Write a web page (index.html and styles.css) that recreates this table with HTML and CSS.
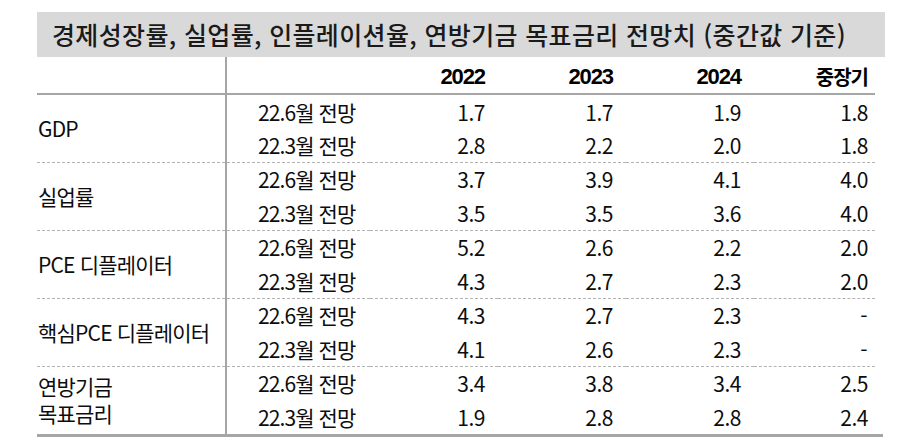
FILE: index.html
```html
<!DOCTYPE html>
<html lang="ko">
<head>
<meta charset="utf-8">
<title>전망치</title>
<link rel="stylesheet" href="styles.css">
</head>
<body>
<div class="panel">
  <div class="title">경제성장률, 실업률, 인플레이션율, 연방기금 목표금리 전망치 (중간값 기준)</div>
  <table class="data">
    <colgroup>
      <col class="c-lab"><col class="c-sub"><col class="c-val"><col class="c-val"><col class="c-val"><col class="c-last">
    </colgroup>
    <thead>
      <tr>
        <th class="lab"></th><th class="sub"></th>
        <th class="year">2022</th><th class="year">2023</th><th class="year">2024</th><th class="year last kr">중장기</th>
      </tr>
    </thead>
    <tbody>
      <tr class="first"><td class="lab" rowspan="2">GDP</td><td class="sub">22.6월 전망</td><td>1.7</td><td>1.7</td><td>1.9</td><td class="last">1.8</td></tr>
      <tr class="second"><td class="sub">22.3월 전망</td><td>2.8</td><td>2.2</td><td>2.0</td><td class="last">1.8</td></tr>
    </tbody>
    <tbody>
      <tr class="first"><td class="lab" rowspan="2">실업률</td><td class="sub">22.6월 전망</td><td>3.7</td><td>3.9</td><td>4.1</td><td class="last">4.0</td></tr>
      <tr class="second"><td class="sub">22.3월 전망</td><td>3.5</td><td>3.5</td><td>3.6</td><td class="last">4.0</td></tr>
    </tbody>
    <tbody>
      <tr class="first"><td class="lab" rowspan="2">PCE 디플레이터</td><td class="sub">22.6월 전망</td><td>5.2</td><td>2.6</td><td>2.2</td><td class="last">2.0</td></tr>
      <tr class="second"><td class="sub">22.3월 전망</td><td>4.3</td><td>2.7</td><td>2.3</td><td class="last">2.0</td></tr>
    </tbody>
    <tbody>
      <tr class="first"><td class="lab" rowspan="2">핵심PCE 디플레이터</td><td class="sub">22.6월 전망</td><td>4.3</td><td>2.7</td><td>2.3</td><td class="last dash">-</td></tr>
      <tr class="second"><td class="sub">22.3월 전망</td><td>4.1</td><td>2.6</td><td>2.3</td><td class="last dash">-</td></tr>
    </tbody>
    <tbody>
      <tr class="first"><td class="lab two" rowspan="2">연방기금<br>목표금리</td><td class="sub">22.6월 전망</td><td>3.4</td><td>3.8</td><td>3.4</td><td class="last">2.5</td></tr>
      <tr class="second"><td class="sub">22.3월 전망</td><td>1.9</td><td>2.8</td><td>2.8</td><td class="last">2.4</td></tr>
    </tbody>
  </table>
  <div class="bottom-rule"></div>
</div>
</body>
</html>
```

FILE: styles.css
```css
html, body {
  margin: 0;
  padding: 0;
  background: #ffffff;
}

body {
  font-family: "Noto Sans CJK KR", "Noto Sans", sans-serif;
  color: #0d0d0d;
}

.panel {
  width: 848px;
  margin: 12px 0 0 37px;
}

.title {
  height: 45px;
  line-height: 45px;
  padding-left: 15px;
  background: #d9d9d9;
  font-size: 25px;
  font-weight: 500;
  letter-spacing: 0.35px;
  color: #1a1a1a;
  white-space: nowrap;
}

.data {
  width: 838px;
  border-collapse: collapse;
  table-layout: fixed;
  font-size: 21px;
  line-height: 1;
}

.c-lab { width: 189px; }
.c-sub { width: 144px; }
.c-val { width: 128px; }
.c-last { width: 121px; }

.data th,
.data td {
  padding: 0 13px 0 0;
  text-align: right;
  vertical-align: middle;
  font-weight: 400;
  letter-spacing: -0.5px;
  white-space: nowrap;
}

.data thead tr {
  height: 37px;
  border-bottom: 2px solid #a6a6a6;
}

.data .year {
  font-family: "Liberation Sans Narrow", "Liberation Sans", sans-serif;
  font-weight: 700;
  font-size: 22px;
  letter-spacing: -1.1px;
  color: #000000;
  padding-top: 4px;
}

.data .year.kr {
  font-family: "Noto Sans CJK KR", sans-serif;
  font-size: 20px;
  letter-spacing: -1px;
}

.data tr.first {
  height: 35px;
}

.data tr.second {
  height: 33px;
}

.data tbody + tbody {
  border-top: 1px dashed #b3b3b3;
}

.data .lab {
  text-align: left;
  padding: 0 0 0 1px;
  border-right: 2px solid #a6a6a6;
  letter-spacing: -0.8px;
}

.data .lab.two {
  line-height: 27px;
}

.data .sub {
  text-align: left;
  padding: 0 0 0 31px;
  letter-spacing: -0.9px;
}

.data .last {
  padding-right: 7px;
}

.data .dash {
  padding-right: 8px;
}

.bottom-rule {
  width: 846px;
  height: 3px;
  background: #a6a6a6;
}
```
